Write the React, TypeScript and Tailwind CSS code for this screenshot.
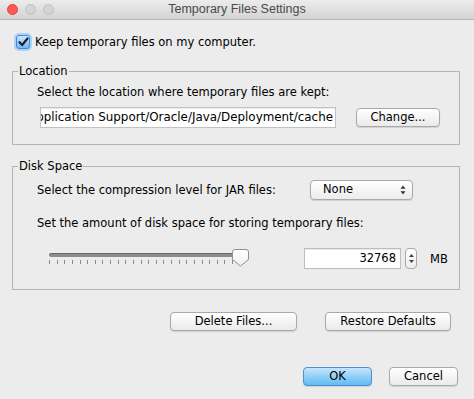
import type { ReactNode } from "react";
import clsx from "clsx";

function AquaButton({ children, className, primary }: { children: ReactNode; className?: string; primary?: boolean }) {
  return (
    <button
      type="button"
      className={clsx(
        "h-[19px] rounded-[4px] border text-[11.5px] leading-none shadow-[0_1px_1px_rgba(0,0,0,0.12)]",
        primary
          ? "border-[#4f8fd0] bg-gradient-to-b from-[#c6e6fc] via-[#92cff8] to-[#5fbcf7]"
          : "border-[#a9a9a9] bg-gradient-to-b from-white to-[#eaeaea]",
        className
      )}
    >
      {children}
    </button>
  );
}

function UpDownArrows() {
  return (
    <svg width="6" height="10" viewBox="0 0 6 10" className="shrink-0">
      <path d="M3 0.5 L5.5 3.8 H0.5 Z" fill="#333" />
      <path d="M3 9.5 L5.5 6.2 H0.5 Z" fill="#333" />
    </svg>
  );
}

function SliderThumb() {
  return (
    <svg width="17" height="18" viewBox="0 0 17 18">
      <defs>
        <linearGradient id="thumbFill" x1="0" y1="0" x2="0" y2="1">
          <stop offset="0" stopColor="#ffffff" />
          <stop offset="1" stopColor="#f0f0f0" />
        </linearGradient>
      </defs>
      <path
        d="M3 0.5 H14 A2.5 2.5 0 0 1 16.5 3 V10.5 L8.5 17 L0.5 10.5 V3 A2.5 2.5 0 0 1 3 0.5 Z"
        fill="url(#thumbFill)"
        stroke="#8f8f8f"
      />
    </svg>
  );
}

export default function App() {
  const ticks = Array.from({ length: 26 }, (_, i) => i);

  return (
    <div className="w-[474px] h-[399px] bg-[#ececec] flex flex-col font-['DejaVu_Sans',sans-serif] text-[11.5px] text-black overflow-hidden">
      {/* Title bar */}
      <div className="h-[20px] shrink-0 grid grid-cols-[1fr_auto_1fr] items-center bg-gradient-to-b from-[#ececec] to-[#d4d4d4] border-b border-[#b8b8b8]">
        <div className="flex items-center gap-[7px] pl-[7px]">
          <span className="w-[11px] h-[11px] rounded-full bg-[#fc5a55] border border-[#e0443e]" />
          <span className="w-[11px] h-[11px] rounded-full bg-[#d4d4d4] border border-[#c1c1c1]" />
          <span className="w-[11px] h-[11px] rounded-full bg-[#d4d4d4] border border-[#c1c1c1]" />
        </div>
        <span className="font-['Liberation_Sans',sans-serif] text-[12.5px] text-[#4a4a4a]">Temporary Files Settings</span>
        <div />
      </div>

      {/* Keep files checkbox */}
      <label className="mt-[14px] ml-[16px] flex items-center gap-[5px] leading-[16px]">
        <span className="w-[14px] h-[14px] rounded-[3px] border border-[#3f86d3] bg-gradient-to-b from-[#cfe7fc] to-[#72b8f2] ring-2 ring-[#a9d3f7] flex items-center justify-center">
          <svg width="11" height="10" viewBox="0 0 11 10">
            <path d="M1.5 5.2 L4.2 8 L9.5 1.5" fill="none" stroke="#16213a" strokeWidth="2.2" strokeLinecap="round" strokeLinejoin="round" />
          </svg>
        </span>
        <span>Keep temporary files on my computer.</span>
      </label>

      {/* Location */}
      <fieldset className="mt-[13px] ml-[12px] mr-[14px] border border-[#b4b4b4] pb-[16px]">
        <legend className="ml-[5px] px-px leading-[16px]">Location</legend>
        <div className="pl-[24px]">
          <p className="mt-[5px] leading-[16px]">Select the location where temporary files are kept:</p>
          <div className="mt-[7px] ml-[3px] flex items-center">
            <div className="w-[296px] h-[21px] bg-white border border-[#c2c2c2] shadow-[inset_0_1px_0_rgba(0,0,0,0.08)] overflow-hidden flex justify-end items-center pr-[2px] whitespace-nowrap text-[11.9px]">
              /Library/Application Support/Oracle/Java/Deployment/cache
            </div>
            <AquaButton className="ml-[20px] w-[84px]">Change...</AquaButton>
          </div>
        </div>
      </fieldset>

      {/* Disk Space */}
      <fieldset className="mt-[13px] ml-[12px] mr-[14px] border border-[#b4b4b4] pb-[20px]">
        <legend className="ml-[5px] px-px leading-[16px]">Disk Space</legend>
        <div className="pl-[24px]">
          <div className="mt-[6px] flex items-center">
            <span className="w-[273px] shrink-0 leading-[16px]">Select the compression level for JAR files:</span>
            <button
              type="button"
              className="w-[103px] h-[20px] rounded-[4px] border border-[#a9a9a9] bg-gradient-to-b from-white to-[#ececec] shadow-[0_1px_1px_rgba(0,0,0,0.12)] flex items-center justify-between pl-[12px] pr-[6px] leading-none"
            >
              <span>None</span>
              <UpDownArrows />
            </button>
          </div>
          <p className="mt-[15px] leading-[16px]">Set the amount of disk space for storing temporary files:</p>
          <div className="mt-[17px] flex items-start">
            {/* Slider */}
            <div className="relative ml-[12px] w-[199px] h-[20px]">
              <div className="mt-[5px] w-[192px] h-[4px] rounded-full bg-[#8d8d8d] shadow-[inset_0_1px_0_rgba(0,0,0,0.25)]" />
              <div className="mt-[3px] w-[192px] flex justify-between">
                {ticks.map((t) => (
                  <span key={t} className="w-px h-[4px] bg-[#8a8a8a]" />
                ))}
              </div>
              <div className="absolute left-[183px] top-px">
                <SliderThumb />
              </div>
            </div>
            <div className="ml-[56px] w-[97px] h-[21px] bg-white border border-[#bdbdbd] shadow-[inset_0_1px_0_rgba(0,0,0,0.08)] flex items-center justify-end pr-[4px]">
              32768
            </div>
            <div className="ml-[4px] w-[12px] h-[21px] rounded-[4px] border border-[#a9a9a9] bg-gradient-to-b from-white to-[#ececec] flex flex-col items-center justify-center gap-[3px]">
              <svg width="5" height="3" viewBox="0 0 5 3">
                <path d="M2.5 0 L5 3 H0 Z" fill="#444" />
              </svg>
              <svg width="5" height="3" viewBox="0 0 5 3">
                <path d="M2.5 3 L5 0 H0 Z" fill="#444" />
              </svg>
            </div>
            <span className="ml-[13px] self-center leading-[16px]">MB</span>
          </div>
        </div>
      </fieldset>

      {/* Cache actions */}
      <div className="mt-[22px] flex justify-end gap-[28px] pr-[23px]">
        <AquaButton className="w-[127px]">Delete Files...</AquaButton>
        <AquaButton className="w-[126px]">Restore Defaults</AquaButton>
      </div>

      {/* Dialog buttons */}
      <div className="mt-[36px] flex justify-end gap-[17px] pr-[16px]">
        <AquaButton primary className="w-[69px]">OK</AquaButton>
        <AquaButton className="w-[69px]">Cancel</AquaButton>
      </div>
    </div>
  );
}
